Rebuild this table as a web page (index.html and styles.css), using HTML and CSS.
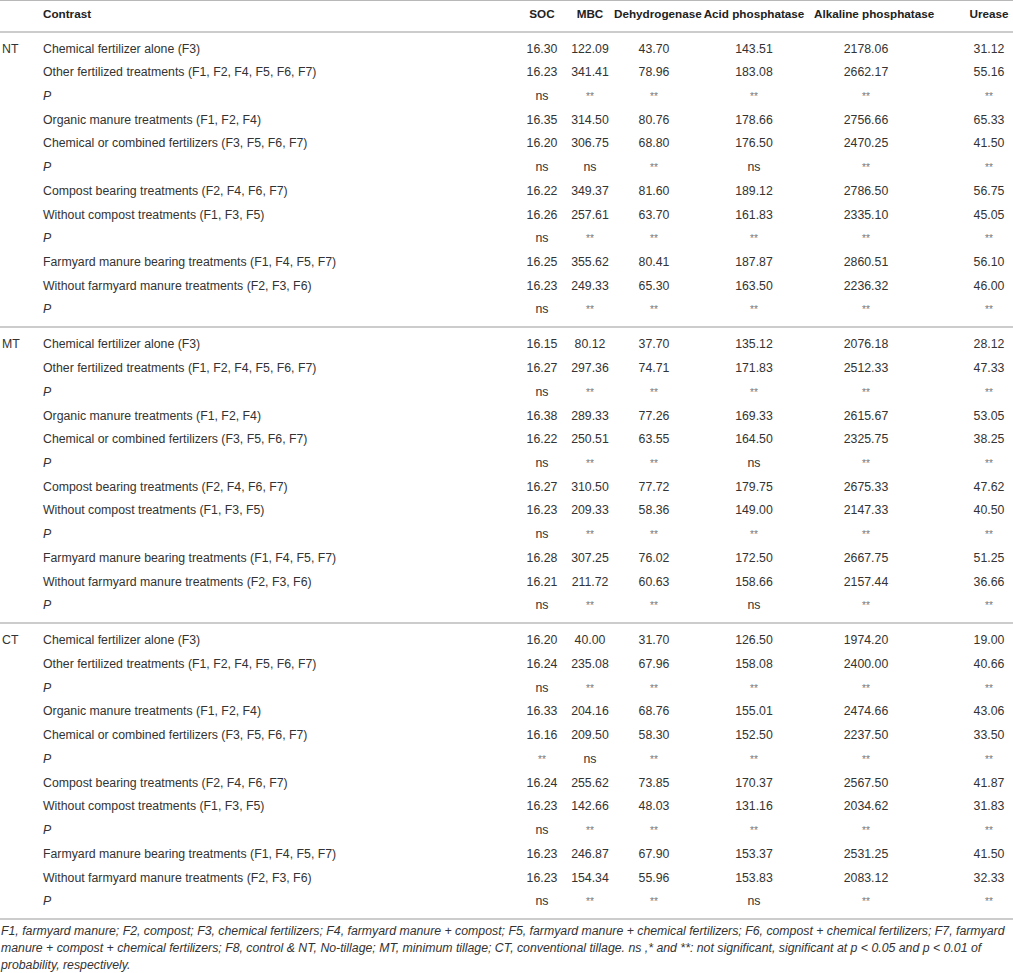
FILE: index.html
```html
<!DOCTYPE html>
<html lang="en">
<head>
<meta charset="utf-8">
<title>Contrast table</title>
<link rel="stylesheet" href="styles.css">
</head>
<body>
<div class="wrap">
<table class="data">
  <colgroup>
    <col class="c-sys"><col class="c-con"><col class="c-soc"><col class="c-mbc"><col class="c-deh"><col class="c-acid"><col class="c-alk"><col class="c-ure">
  </colgroup>
  <thead>
    <tr><th></th><th class="left">Contrast</th><th>SOC</th><th>MBC</th><th>Dehydrogenase</th><th>Acid phosphatase</th><th>Alkaline phosphatase</th><th class="ure">Urease</th></tr>
  </thead>
  <tbody>
    <tr><td class="sys">NT</td><td class="left">Chemical fertilizer alone (F3)</td><td>16.30</td><td>122.09</td><td>43.70</td><td>143.51</td><td>2178.06</td><td class="ure">31.12</td></tr>
    <tr><td></td><td class="left">Other fertilized treatments (F1, F2, F4, F5, F6, F7)</td><td>16.23</td><td>341.41</td><td>78.96</td><td>183.08</td><td>2662.17</td><td class="ure">55.16</td></tr>
    <tr><td></td><td class="left"><i>P</i></td><td>ns</td><td class="s">**</td><td class="s">**</td><td class="s">**</td><td class="s">**</td><td class="ure s">**</td></tr>
    <tr><td></td><td class="left">Organic manure treatments (F1, F2, F4)</td><td>16.35</td><td>314.50</td><td>80.76</td><td>178.66</td><td>2756.66</td><td class="ure">65.33</td></tr>
    <tr><td></td><td class="left">Chemical or combined fertilizers (F3, F5, F6, F7)</td><td>16.20</td><td>306.75</td><td>68.80</td><td>176.50</td><td>2470.25</td><td class="ure">41.50</td></tr>
    <tr><td></td><td class="left"><i>P</i></td><td>ns</td><td>ns</td><td class="s">**</td><td>ns</td><td class="s">**</td><td class="ure s">**</td></tr>
    <tr><td></td><td class="left">Compost bearing treatments (F2, F4, F6, F7)</td><td>16.22</td><td>349.37</td><td>81.60</td><td>189.12</td><td>2786.50</td><td class="ure">56.75</td></tr>
    <tr><td></td><td class="left">Without compost treatments (F1, F3, F5)</td><td>16.26</td><td>257.61</td><td>63.70</td><td>161.83</td><td>2335.10</td><td class="ure">45.05</td></tr>
    <tr><td></td><td class="left"><i>P</i></td><td>ns</td><td class="s">**</td><td class="s">**</td><td class="s">**</td><td class="s">**</td><td class="ure s">**</td></tr>
    <tr><td></td><td class="left">Farmyard manure bearing treatments (F1, F4, F5, F7)</td><td>16.25</td><td>355.62</td><td>80.41</td><td>187.87</td><td>2860.51</td><td class="ure">56.10</td></tr>
    <tr><td></td><td class="left">Without farmyard manure treatments (F2, F3, F6)</td><td>16.23</td><td>249.33</td><td>65.30</td><td>163.50</td><td>2236.32</td><td class="ure">46.00</td></tr>
    <tr><td></td><td class="left"><i>P</i></td><td>ns</td><td class="s">**</td><td class="s">**</td><td class="s">**</td><td class="s">**</td><td class="ure s">**</td></tr>
  </tbody>
  <tbody>
    <tr><td class="sys">MT</td><td class="left">Chemical fertilizer alone (F3)</td><td>16.15</td><td>80.12</td><td>37.70</td><td>135.12</td><td>2076.18</td><td class="ure">28.12</td></tr>
    <tr><td></td><td class="left">Other fertilized treatments (F1, F2, F4, F5, F6, F7)</td><td>16.27</td><td>297.36</td><td>74.71</td><td>171.83</td><td>2512.33</td><td class="ure">47.33</td></tr>
    <tr><td></td><td class="left"><i>P</i></td><td>ns</td><td class="s">**</td><td class="s">**</td><td class="s">**</td><td class="s">**</td><td class="ure s">**</td></tr>
    <tr><td></td><td class="left">Organic manure treatments (F1, F2, F4)</td><td>16.38</td><td>289.33</td><td>77.26</td><td>169.33</td><td>2615.67</td><td class="ure">53.05</td></tr>
    <tr><td></td><td class="left">Chemical or combined fertilizers (F3, F5, F6, F7)</td><td>16.22</td><td>250.51</td><td>63.55</td><td>164.50</td><td>2325.75</td><td class="ure">38.25</td></tr>
    <tr><td></td><td class="left"><i>P</i></td><td>ns</td><td class="s">**</td><td class="s">**</td><td>ns</td><td class="s">**</td><td class="ure s">**</td></tr>
    <tr><td></td><td class="left">Compost bearing treatments (F2, F4, F6, F7)</td><td>16.27</td><td>310.50</td><td>77.72</td><td>179.75</td><td>2675.33</td><td class="ure">47.62</td></tr>
    <tr><td></td><td class="left">Without compost treatments (F1, F3, F5)</td><td>16.23</td><td>209.33</td><td>58.36</td><td>149.00</td><td>2147.33</td><td class="ure">40.50</td></tr>
    <tr><td></td><td class="left"><i>P</i></td><td>ns</td><td class="s">**</td><td class="s">**</td><td class="s">**</td><td class="s">**</td><td class="ure s">**</td></tr>
    <tr><td></td><td class="left">Farmyard manure bearing treatments (F1, F4, F5, F7)</td><td>16.28</td><td>307.25</td><td>76.02</td><td>172.50</td><td>2667.75</td><td class="ure">51.25</td></tr>
    <tr><td></td><td class="left">Without farmyard manure treatments (F2, F3, F6)</td><td>16.21</td><td>211.72</td><td>60.63</td><td>158.66</td><td>2157.44</td><td class="ure">36.66</td></tr>
    <tr><td></td><td class="left"><i>P</i></td><td>ns</td><td class="s">**</td><td class="s">**</td><td>ns</td><td class="s">**</td><td class="ure s">**</td></tr>
  </tbody>
  <tbody>
    <tr><td class="sys">CT</td><td class="left">Chemical fertilizer alone (F3)</td><td>16.20</td><td>40.00</td><td>31.70</td><td>126.50</td><td>1974.20</td><td class="ure">19.00</td></tr>
    <tr><td></td><td class="left">Other fertilized treatments (F1, F2, F4, F5, F6, F7)</td><td>16.24</td><td>235.08</td><td>67.96</td><td>158.08</td><td>2400.00</td><td class="ure">40.66</td></tr>
    <tr><td></td><td class="left"><i>P</i></td><td>ns</td><td class="s">**</td><td class="s">**</td><td class="s">**</td><td class="s">**</td><td class="ure s">**</td></tr>
    <tr><td></td><td class="left">Organic manure treatments (F1, F2, F4)</td><td>16.33</td><td>204.16</td><td>68.76</td><td>155.01</td><td>2474.66</td><td class="ure">43.06</td></tr>
    <tr><td></td><td class="left">Chemical or combined fertilizers (F3, F5, F6, F7)</td><td>16.16</td><td>209.50</td><td>58.30</td><td>152.50</td><td>2237.50</td><td class="ure">33.50</td></tr>
    <tr><td></td><td class="left"><i>P</i></td><td class="s">**</td><td>ns</td><td class="s">**</td><td class="s">**</td><td class="s">**</td><td class="ure s">**</td></tr>
    <tr><td></td><td class="left">Compost bearing treatments (F2, F4, F6, F7)</td><td>16.24</td><td>255.62</td><td>73.85</td><td>170.37</td><td>2567.50</td><td class="ure">41.87</td></tr>
    <tr><td></td><td class="left">Without compost treatments (F1, F3, F5)</td><td>16.23</td><td>142.66</td><td>48.03</td><td>131.16</td><td>2034.62</td><td class="ure">31.83</td></tr>
    <tr><td></td><td class="left"><i>P</i></td><td>ns</td><td class="s">**</td><td class="s">**</td><td class="s">**</td><td class="s">**</td><td class="ure s">**</td></tr>
    <tr><td></td><td class="left">Farmyard manure bearing treatments (F1, F4, F5, F7)</td><td>16.23</td><td>246.87</td><td>67.90</td><td>153.37</td><td>2531.25</td><td class="ure">41.50</td></tr>
    <tr><td></td><td class="left">Without farmyard manure treatments (F2, F3, F6)</td><td>16.23</td><td>154.34</td><td>55.96</td><td>153.83</td><td>2083.12</td><td class="ure">32.33</td></tr>
    <tr><td></td><td class="left"><i>P</i></td><td>ns</td><td class="s">**</td><td class="s">**</td><td>ns</td><td class="s">**</td><td class="ure s">**</td></tr>
  </tbody>
</table>
<p class="note">F1, farmyard manure; F2, compost; F3, chemical fertilizers; F4, farmyard manure + compost; F5, farmyard manure + chemical fertilizers; F6, compost + chemical fertilizers; F7, farmyard manure + compost + chemical fertilizers; F8, control &amp; NT, No-tillage; MT, minimum tillage; CT, conventional tillage. ns ,* and **: not significant, significant at p &lt; 0.05 and p &lt; 0.01 of probability, respectively.</p>
</div>
</body>
</html>
```

FILE: styles.css
```css
html, body {
  margin: 0;
  padding: 0;
  background: #ffffff;
}
body {
  font-family: "Liberation Sans", Arial, Helvetica, sans-serif;
  color: #333333;
}
.wrap {
  width: 1013px;
}
.data {
  width: 1013px;
  border-collapse: collapse;
  table-layout: fixed;
  font-size: 12.3px;
  border-top: 1px solid #b8b8b8;
}
.c-sys { width: 43px; }
.c-con { width: 475px; }
.c-soc { width: 48px; }
.c-mbc { width: 48px; }
.c-deh { width: 80px; }
.c-acid { width: 120px; }
.c-alk { width: 104px; }
.c-ure { width: 95px; }
.data th {
  font-size: 11.7px;
  font-weight: bold;
  color: #222222;
  text-align: center;
  padding: 5px 0 8.5px;
  line-height: 16px;
  border-bottom: 2px solid #cccccc;
  white-space: nowrap;
}
.data td {
  text-align: center;
  padding: 3.36px 0;
  line-height: 17px;
  white-space: nowrap;
}
.data .left { text-align: left; }
.data .sys { text-align: left; padding-left: 2px; }
.data .ure { padding-left: 47px; }
.data td.s { font-size: 10px; color: #777777; }
.data tbody tr:first-child td { padding-top: 8px; }
.data tbody tr:last-child td { padding-bottom: 8px; }
.data tbody { border-bottom: 2px solid #cccccc; }
.note {
  margin: 2.5px 0 0 1px;
  font-size: 12.3px;
  font-style: italic;
  line-height: 17px;
  color: #333333;
}
```
